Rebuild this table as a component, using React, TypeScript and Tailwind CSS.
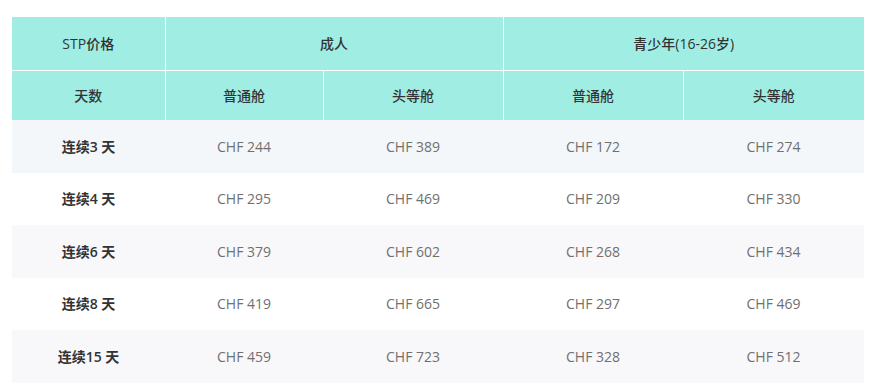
const rows: [string, string, string, string, string][] = [
  ["连续3 天", "CHF 244", "CHF 389", "CHF 172", "CHF 274"],
  ["连续4 天", "CHF 295", "CHF 469", "CHF 209", "CHF 330"],
  ["连续6 天", "CHF 379", "CHF 602", "CHF 268", "CHF 434"],
  ["连续8 天", "CHF 419", "CHF 665", "CHF 297", "CHF 469"],
  ["连续15 天", "CHF 459", "CHF 723", "CHF 328", "CHF 512"],
];

const rowBg = ["bg-[#f3f7f9]", "bg-white", "bg-[#f8f7fa]", "bg-white", "bg-[#f8f7fa]"];

export default function App() {
  return (
    <div
      className="w-[880px] h-[385px] bg-white pt-[17px] pl-[12px]"
      style={{ fontFamily: '"Open Sans", "Noto Sans CJK SC", sans-serif' }}
    >
      <table className="w-[852px] table-fixed border-collapse text-[14px]">
        <colgroup>
          <col className="w-[153px]" />
          <col className="w-[158px]" />
          <col className="w-[180px]" />
          <col className="w-[180px]" />
          <col className="w-[181px]" />
        </colgroup>
        <thead className="bg-[#a0ede4] text-[#333]">
          <tr className="h-[53px]">
            <th className="border-r border-b border-white font-medium">STP价格</th>
            <th colSpan={2} className="border-r border-b border-white font-medium">
              成人
            </th>
            <th colSpan={2} className="border-b border-white font-medium">
              青少年(16-26岁)
            </th>
          </tr>
          <tr className="h-[50px]">
            <th className="border-r border-white font-medium">天数</th>
            <th className="border-r border-white font-medium">普通舱</th>
            <th className="border-r border-white font-medium">头等舱</th>
            <th className="border-r border-white font-medium">普通舱</th>
            <th className="font-medium">头等舱</th>
          </tr>
        </thead>
        <tbody>
          {rows.map((r, i) => (
            <tr key={r[0]} className={`h-[52.5px] ${rowBg[i]}`}>
              <td className="text-center font-semibold text-[#333]">{r[0]}</td>
              {r.slice(1).map((v, j) => (
                <td key={j} className="text-center text-[#707070]">
                  {v}
                </td>
              ))}
            </tr>
          ))}
        </tbody>
      </table>
    </div>
  );
}
